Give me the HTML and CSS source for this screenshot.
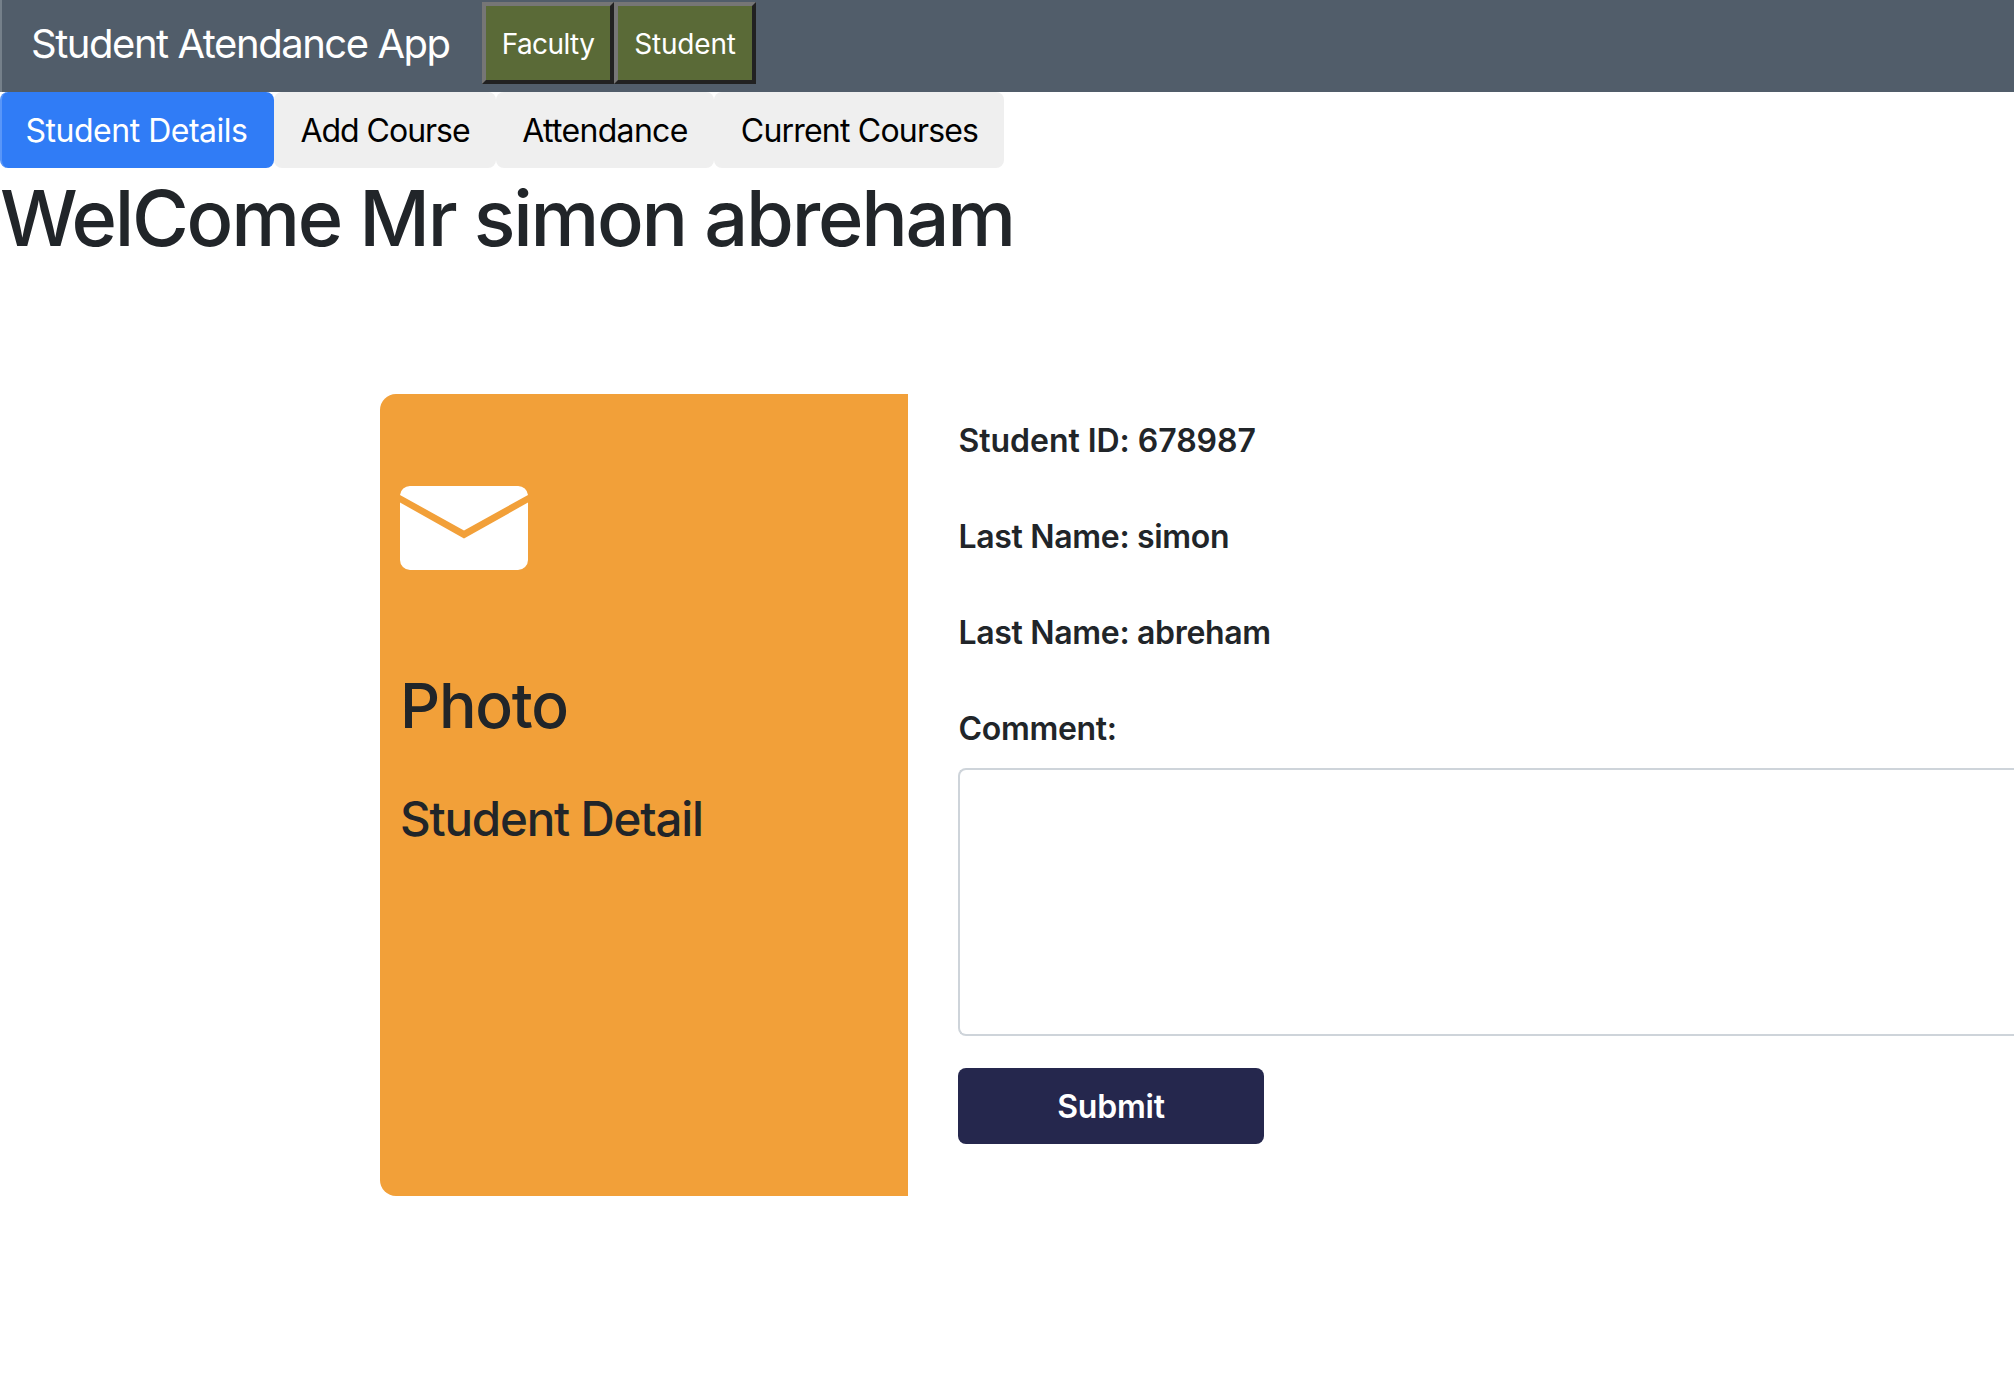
FILE: index.html
```html
<!DOCTYPE html>
<html lang="en">
<head>
<meta charset="utf-8">
<title>Student Atendance App</title>
<link rel="stylesheet" href="styles.css">
</head>
<body>
<nav class="navbar">
  <span class="brand">Student Atendance App</span>
  <button class="nav-button faculty">Faculty</button>
  <button class="nav-button student">Student</button>
</nav>
<div class="tabs">
  <button class="tab active">Student Details</button>
  <button class="tab add-course">Add Course</button>
  <button class="tab attendance">Attendance</button>
  <button class="tab courses">Current Courses</button>
</div>
<h1 class="welcome">WelCome Mr simon abreham</h1>
<main class="contact">
  <section class="photo-card">
    <svg class="envelope" viewBox="0 0 128 84" width="128" height="84">
      <path fill="#fff" d="M10 0H118A10 10 0 0 1 128 9L64 44.5L0 9A10 10 0 0 1 10 0Z"/>
      <path fill="#fff" d="M0 16.5L64 52.5L128 16.5V74A10 10 0 0 1 118 84H10A10 10 0 0 1 0 74Z"/>
    </svg>
    <h2 class="photo-title">Photo</h2>
    <h4 class="photo-subtitle">Student Detail</h4>
  </section>
  <form class="details">
    <label class="field student-id">Student ID: 678987</label>
    <label class="field">Last Name: simon</label>
    <label class="field">Last Name: abreham</label>
    <label class="field comment-label" for="comment">Comment:</label>
    <textarea class="comment" id="comment"></textarea>
    <button class="submit" type="button">Submit</button>
  </form>
</main>
</body>
</html>
```
FILE: styles.css
```css
* { box-sizing: border-box; }

body {
  margin: 0;
  background: #fff;
  color: #212529;
  font-family: Inter, "Liberation Sans", sans-serif;
  font-size: 32px;
  line-height: 48px;
}

button { font-family: inherit; }
h1, h2, h4 { margin: 0; font-weight: 500; }

.navbar {
  display: flex;
  align-items: center;
  height: 92px;
  padding: 2px 0 8px 29px;
  border-left: 2px solid #75808a;
  background: #515d6a;
}

.brand {
  width: 451px;
  padding-top: 2px;
  color: #fff;
  font-size: 40px;
  letter-spacing: -1.46px;
  white-space: nowrap;
}

.nav-button {
  height: 82px;
  padding: 1px 0 0;
  border: 4px solid;
  border-color: #767676 #212121 #212121 #767676;
  background: #5a6a37;
  color: #fff;
  font-size: 28px;
}
.faculty { width: 132px; letter-spacing: -0.6px; }
.student { width: 142px; letter-spacing: -0.2px; }

.tabs { display: flex; height: 76px; }

.tab {
  padding: 0;
  border: 0;
  border-radius: 8px;
  background: #efefef;
  color: #000;
  font-size: 32px;
}
.active {
  width: 274px;
  padding-right: 3px;
  border-left: 2px solid #5996f8;
  background: #307cf6;
  color: #fff;
  letter-spacing: -0.49px;
}
.add-course { width: 222px; letter-spacing: -1.02px; }
.attendance { width: 218px; letter-spacing: -0.7px; }
.courses { width: 290px; padding-left: 1px; letter-spacing: -0.8px; }

.welcome {
  padding-top: 2px;
  font-size: 77.5px;
  line-height: 96px;
  letter-spacing: -2.28px;
  white-space: nowrap;
}

.contact {
  display: flex;
  height: 802px;
  margin: 128px 0 0 380px;
}

.photo-card {
  width: 528px;
  padding: 92px 20px;
  border-radius: 16px 0 0 16px;
  background: #f2a039;
}
.envelope { display: block; }

.photo-title {
  margin-top: 97px;
  font-size: 62.5px;
  line-height: 77px;
  letter-spacing: -1.2px;
}
.photo-subtitle {
  margin-top: 46px;
  font-size: 47.5px;
  line-height: 58px;
  letter-spacing: -1.2px;
}

.details {
  display: flex;
  flex: 1;
  flex-direction: column;
  align-items: flex-start;
  padding: 23px 0 0 50px;
}

.field {
  margin-bottom: 48px;
  padding-left: 0.5px;
  font-weight: 600;
  letter-spacing: -0.32px;
}
.student-id { letter-spacing: -0.04px; }
.comment-label { margin-bottom: 15px; }

/* The comment box bleeds off the right edge of the window. */
.comment {
  width: 100%;
  height: 268px;
  border: 2px solid #ced4da;
  border-right: 0;
  border-radius: 8px 0 0 8px;
  background: #fff;
  resize: none;
}

.submit {
  width: 306px;
  height: 76px;
  margin-top: 32px;
  padding: 0;
  border: 0;
  border-radius: 8px;
  background: #25274d;
  color: #fff;
  font-size: 32px;
  font-weight: 600;
  letter-spacing: -0.2px;
}
```
